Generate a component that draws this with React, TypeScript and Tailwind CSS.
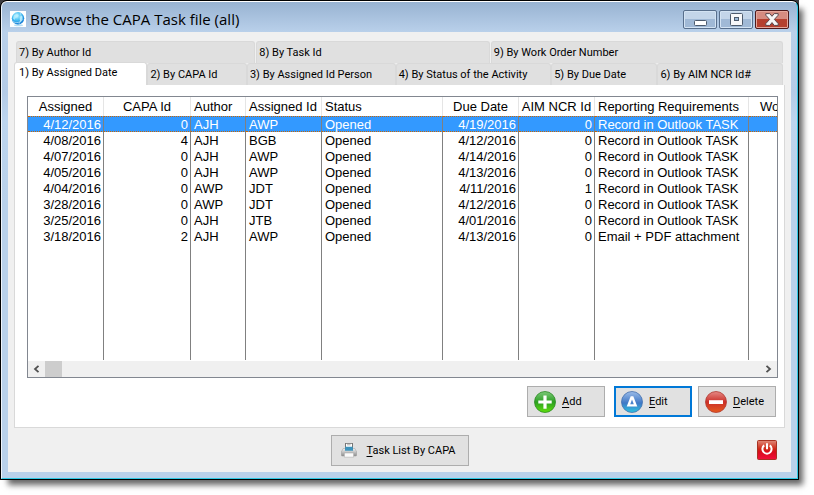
import { useState } from 'react';

const TABS_BACK = [
  { label: '7) By Author Id', width: 'flex-[240]' },
  { label: '8) By Task Id', width: 'flex-[234]' },
  { label: '9) By Work Order Number', width: 'flex-[294]' },
];

const TABS_FRONT = [
  { label: '1) By Assigned Date', width: 'flex-[132]' },
  { label: '2) By CAPA Id', width: 'flex-[99]' },
  { label: '3) By Assigned Id Person', width: 'flex-[150]' },
  { label: '4) By Status of the Activity', width: 'flex-[157]' },
  { label: '5) By Due Date', width: 'flex-[106]' },
  { label: '6) By AIM NCR Id#', width: 'flex-[126]' },
];

const COLUMNS = [
  { title: 'Assigned', col: 'w-[76px]', head: 'text-center', cell: 'text-right' },
  { title: 'CAPA Id', col: 'w-[87px]', head: 'text-center', cell: 'text-right' },
  { title: 'Author', col: 'w-[55px]', head: 'text-left pl-[3px]', cell: 'text-left' },
  { title: 'Assigned Id', col: 'w-[76px]', head: 'text-left pl-[3px]', cell: 'text-left' },
  { title: 'Status', col: 'w-[121px]', head: 'text-left pl-[3px]', cell: 'text-left' },
  { title: 'Due Date', col: 'w-[76px]', head: 'text-center', cell: 'text-right' },
  { title: 'AIM NCR Id', col: 'w-[76px]', head: 'text-center', cell: 'text-right' },
  { title: 'Reporting Requirements', col: 'w-[154px]', head: 'text-left pl-[3px]', cell: 'text-left' },
];

const ROWS = [
  ['4/12/2016', '0', 'AJH', 'AWP', 'Opened', '4/19/2016', '0', 'Record in Outlook TASK'],
  ['4/08/2016', '4', 'AJH', 'BGB', 'Opened', '4/12/2016', '0', 'Record in Outlook TASK'],
  ['4/07/2016', '0', 'AJH', 'AWP', 'Opened', '4/14/2016', '0', 'Record in Outlook TASK'],
  ['4/05/2016', '0', 'AJH', 'AWP', 'Opened', '4/13/2016', '0', 'Record in Outlook TASK'],
  ['4/04/2016', '0', 'AWP', 'JDT', 'Opened', '4/11/2016', '1', 'Record in Outlook TASK'],
  ['3/28/2016', '0', 'AWP', 'JDT', 'Opened', '4/12/2016', '0', 'Record in Outlook TASK'],
  ['3/25/2016', '0', 'AJH', 'JTB', 'Opened', '4/01/2016', '0', 'Record in Outlook TASK'],
  ['3/18/2016', '2', 'AJH', 'AWP', 'Opened', '4/13/2016', '0', 'Email + PDF attachment'],
];

function GlobeIcon() {
  return (
    <svg width="16" height="16" viewBox="0 0 16 16" aria-hidden="true">
      <defs>
        <radialGradient id="globe" cx="0.4" cy="0.3" r="0.75">
          <stop offset="0" stopColor="#c8f4ff" />
          <stop offset="0.45" stopColor="#49c3f5" />
          <stop offset="1" stopColor="#0a6fd0" />
        </radialGradient>
      </defs>
      <rect width="16" height="16" fill="#fff" />
      <ellipse cx="8.5" cy="14.3" rx="4.5" ry="1" fill="#b5ddf3" />
      <circle cx="8" cy="7.3" r="6.2" fill="url(#globe)" />
      <path d="M4 4.2 7 3l1.6 1.3-1 2-2.1.8L4.6 9 3 7.4zM9.6 5.6l2.6-.9.6 2.6-1.7 2.9-1.4-1z" fill="#b9f0ff" opacity=".75" />
      <path d="M3 10.6c3 1.8 7.4 1.2 10-2.4M10 1.8c1.8 2.8 1.6 7-1 11" stroke="#dff8ff" strokeWidth=".6" fill="none" />
    </svg>
  );
}

function MinimizeIcon() {
  return (
    <svg width="14" height="13" viewBox="0 0 14 13" aria-hidden="true">
      <rect x="1.5" y="7.5" width="12" height="5" rx="1" fill="#fff" stroke="#4d5b6d" />
    </svg>
  );
}

function MaximizeIcon() {
  return (
    <svg width="13" height="13" viewBox="0 0 13 13" aria-hidden="true">
      <rect x=".5" y=".5" width="12" height="12" rx="1" fill="#f7f8fa" stroke="#4d5b6d" />
      <rect x="4.5" y="4.5" width="4" height="3" fill="#9dbbd9" stroke="#4d5b6d" />
    </svg>
  );
}

function CloseIcon() {
  return (
    <svg width="14" height="13" viewBox="0 0 14 13" aria-hidden="true">
      <path
        d="M.8.6h4L7 3.3 9.2.6h4v1.6L9.4 6.4l3.8 4.2v1.8h-4L7 9.6l-2.2 2.8h-4v-1.8l3.8-4.2L.8 2.2z"
        fill="#f6f6f6"
        stroke="#5c474c"
        strokeLinejoin="round"
      />
    </svg>
  );
}

function AddIcon() {
  return (
    <svg width="22" height="22" viewBox="0 0 22 22" aria-hidden="true">
      <defs>
        <linearGradient id="add" x1="0" y1="0" x2="0" y2="1">
          <stop offset="0" stopColor="#7cc97a" />
          <stop offset="0.5" stopColor="#2c9f22" />
          <stop offset="1" stopColor="#5fe00c" />
        </linearGradient>
      </defs>
      <circle cx="11" cy="11" r="10.5" fill="url(#add)" stroke="#2a8a22" strokeWidth=".8" />
      <path d="M9.4 4.5h3.2v4.9h5.1v3.2h-5.1v5.1H9.4v-5.1H4.3V9.4h5.1z" fill="#fff" />
    </svg>
  );
}

function EditIcon() {
  return (
    <svg width="22" height="22" viewBox="0 0 22 22" aria-hidden="true">
      <defs>
        <linearGradient id="edit" x1="0" y1="0" x2="0" y2="1">
          <stop offset="0" stopColor="#9cbce8" />
          <stop offset="0.55" stopColor="#3f78c6" />
          <stop offset="1" stopColor="#2cc4e0" />
        </linearGradient>
      </defs>
      <circle cx="11" cy="11" r="10.5" fill="url(#edit)" stroke="#4370ae" strokeWidth=".8" />
      <path d="M9.7 5.2h2.6l4 10.2H5.7z" fill="#fff" />
      <path d="M11 8.6l1.8 4.6H9.2z" fill="#4a83cc" />
    </svg>
  );
}

function DeleteIcon() {
  return (
    <svg width="22" height="22" viewBox="0 0 22 22" aria-hidden="true">
      <defs>
        <linearGradient id="del" x1="0" y1="0" x2="0" y2="1">
          <stop offset="0" stopColor="#e58a86" />
          <stop offset="0.5" stopColor="#cb2f28" />
          <stop offset="1" stopColor="#e65a1e" />
        </linearGradient>
      </defs>
      <circle cx="11" cy="11" r="10.5" fill="url(#del)" stroke="#b03a30" strokeWidth=".8" />
      <rect x="4" y="9.2" width="14" height="3.8" fill="#fff" />
    </svg>
  );
}

function PrinterIcon() {
  return (
    <svg width="16" height="16" viewBox="0 0 16 16" aria-hidden="true">
      <defs>
        <linearGradient id="tray" x1="0" y1="0" x2="0" y2="1">
          <stop offset="0" stopColor="#f4f4f4" />
          <stop offset="1" stopColor="#8d8d8d" />
        </linearGradient>
      </defs>
      <path d="M2.2 6.5h11.6l1.9 3.4v3.2q0 .9-1 .9H1.3q-1 0-1-.9V9.9z" fill="url(#tray)" stroke="#999" strokeWidth=".5" />
      <path d="M4.2 1h7.6v7H4.2z" fill="#5b5b5b" />
      <path d="M5 1.7h6V5H5z" fill="#fff" />
      <path d="M6 2.8h3.6" stroke="#888" strokeWidth=".7" />
      <path d="M4.4 4.8h7.2l.5 4H3.9z" fill="#3d94bd" />
      <path d="M3.4 11h9.2v4.2H3.4z" fill="#fafafa" stroke="#a5a5a5" strokeWidth=".5" />
    </svg>
  );
}

function PowerIcon() {
  return (
    <svg width="20" height="20" viewBox="0 0 20 20" aria-hidden="true">
      <defs>
        <linearGradient id="power" x1="0" y1="0" x2="0" y2="1">
          <stop offset="0" stopColor="#e08a78" />
          <stop offset="0.45" stopColor="#cf2614" />
          <stop offset="0.6" stopColor="#d80c1c" />
          <stop offset="1" stopColor="#f2103c" />
        </linearGradient>
      </defs>
      <rect x=".5" y=".5" width="19" height="19" rx="1" fill="url(#power)" stroke="#a83222" />
      <path d="M7.2 5.4a4.6 4.6 0 1 0 5.6 0" fill="none" stroke="#fff" strokeWidth="2" />
      <path d="M10 3.2v6" stroke="#fff" strokeWidth="2" />
    </svg>
  );
}

interface TabProps {
  label: string;
  width: string;
  active: boolean;
  onSelect: () => void;
}

function Tab({ label, width, active, onSelect }: TabProps) {
  return (
    <button
      role="tab"
      aria-selected={active}
      onClick={onSelect}
      className={`${width} min-w-0 text-left whitespace-nowrap rounded-t-[3px] border-x border-t border-[#d9d9d9] ${
        active ? 'bg-white pl-1 pb-0.5 -mt-px -mb-px h-6' : 'bg-[#e0e0e0] pl-0.5 pt-0.5 h-[22px]'
      }`}
    >
      {label}
    </button>
  );
}

interface ActionProps {
  icon: React.ReactNode;
  label: string;
  focused?: boolean;
}

function ActionButton({ icon, label, focused }: ActionProps) {
  return (
    <button
      className={`flex items-center gap-1.5 h-[31px] w-[78px] bg-[#e1e1e1] ${
        focused ? 'border-2 border-[#0078d7] pl-[5px]' : 'border border-[#adadad] pl-1.5'
      }`}
    >
      {icon}
      <span className="pt-0.5">
        <span className="underline underline-offset-2">{label[0]}</span>
        {label.slice(1)}
      </span>
    </button>
  );
}

export default function App() {
  const [tab, setTab] = useState(TABS_FRONT[0].label);
  const [selected, setSelected] = useState(0);

  return (
    <div className="h-screen min-h-[400px] bg-white pr-[15px] pb-[15px] flex font-['Roboto','Liberation_Sans',sans-serif] text-[11px] text-black">
      <div className="flex-1 min-w-0 flex bg-[#3b3b3f] shadow-[6px_7px_6px_-2px_rgba(0,0,0,0.6)]">
        <main className="flex-1 min-w-0 flex border border-black rounded-t-[7px] bg-black">
          <div className="flex-1 min-w-0 flex flex-col rounded-t-md border border-t-white border-l-[#eef4fb] border-r-[#2fc8e4] border-b-[#2fc8e4] bg-[linear-gradient(180deg,#98b3d2_0px,#b9d0ea_30px,#b4cbe6_90px,#bdd5ee_120px,#b9d1ea_200px)] px-1.5 pb-1.5">
            {/* Title bar */}
            <header className="h-[30px] shrink-0 flex items-center">
              <div className="flex items-center gap-1 flex-1 min-w-0 pl-0.5 pt-1">
                <GlobeIcon />
                <h1 className="font-['Open_Sans','Noto_Sans',sans-serif] text-[15px] leading-5 whitespace-nowrap">
                  Browse the CAPA Task file (all)
                </h1>
              </div>
              <div className="flex gap-0.5 pr-0.5 pt-1">
                <button
                  aria-label="Minimize"
                  className="w-[34px] h-[19px] flex items-center justify-center rounded-[2px] border border-[#586f8c] shadow-[inset_0_0_0_1px_#d3e3f3] bg-linear-to-b from-[#c3d5e9] from-45% to-[#a0b9d6] to-50%"
                >
                  <MinimizeIcon />
                </button>
                <button
                  aria-label="Maximize"
                  className="w-[34px] h-[19px] flex items-center justify-center rounded-[2px] border border-[#586f8c] shadow-[inset_0_0_0_1px_#d3e3f3] bg-linear-to-b from-[#c3d5e9] from-45% to-[#a0b9d6] to-50%"
                >
                  <MaximizeIcon />
                </button>
                <button
                  aria-label="Close"
                  className="w-[34px] h-[19px] flex items-center justify-center rounded-[2px] border border-[#4e1a1c] shadow-[inset_0_0_0_1px_#e5a79c] bg-linear-to-b from-[#d58b80] from-45% to-[#b5402f] to-50%"
                >
                  <CloseIcon />
                </button>
              </div>
            </header>

            <div className="flex-1 min-h-0 flex flex-col bg-[#f0f0f0] pt-[9px] px-1.5">
              {/* Tabs */}
              <div role="tablist" className="pr-px">
                <div className="flex gap-px pl-0.5 pr-px">
                  {TABS_BACK.map((t) => (
                    <Tab key={t.label} {...t} active={tab === t.label} onSelect={() => setTab(t.label)} />
                  ))}
                </div>
                <div className="flex pr-px">
                  {TABS_FRONT.map((t) => (
                    <Tab key={t.label} {...t} active={tab === t.label} onSelect={() => setTab(t.label)} />
                  ))}
                </div>
              </div>

              {/* Panel */}
              <section className="flex-1 min-h-0 flex flex-col bg-white border border-t-0 border-[#d9d9d9] pt-[11px] pl-3 pr-1.5 pb-2.5">
                <div className="flex-1 min-h-0 flex flex-col border border-[#828790]">
                  <div className="flex-1 min-h-0 overflow-hidden grid">
                    <table className="w-full h-full table-fixed border-separate border-spacing-0 font-['Liberation_Sans',Arial,sans-serif] text-[13px] leading-[13px] whitespace-nowrap">
                      <colgroup>
                        {COLUMNS.map((c) => (
                          <col key={c.title} className={c.col} />
                        ))}
                        <col />
                      </colgroup>
                      <thead>
                        <tr className="h-[19px]">
                          {COLUMNS.map((c) => (
                            <th key={c.title} className={`font-normal py-0 pr-0 border-r border-[#e5e5e5] ${c.head}`}>
                              {c.title}
                            </th>
                          ))}
                          <th className="font-normal p-0 pl-[11px] text-left overflow-hidden">Work Order</th>
                        </tr>
                      </thead>
                      <tbody>
                        {ROWS.map((row, i) => {
                          const edge =
                            i === selected
                              ? 'border-y border-y-[#cc6600] [border-top-style:dotted] [border-bottom-style:dotted]'
                              : '';
                          return (
                            <tr
                              key={row[0]}
                              onClick={() => setSelected(i)}
                              className={i === selected ? 'h-4 bg-[#3399ff] text-white' : 'h-4'}
                            >
                              {row.map((value, j) => (
                                <td
                                  key={COLUMNS[j].title}
                                  className={`pt-px pb-0 pl-[3px] pr-0.5 border-r border-r-[#808080] ${COLUMNS[j].cell} ${edge}`}
                                >
                                  {value}
                                </td>
                              ))}
                              <td className={`p-0 ${edge}`} />
                            </tr>
                          );
                        })}
                        {/* Empty space under the rows keeps the column lines */}
                        <tr>
                          {COLUMNS.map((c) => (
                            <td key={c.title} className="p-0 border-r border-[#808080]" />
                          ))}
                          <td className="p-0" />
                        </tr>
                      </tbody>
                    </table>
                  </div>
                  {/* Horizontal scroll bar */}
                  <div className="h-4 mt-px shrink-0 flex items-center bg-[#f0f0f0]">
                    <button aria-label="Scroll left" className="w-[17px] h-full flex items-center justify-center">
                      <svg width="7" height="8" viewBox="0 0 7 8" aria-hidden="true">
                        <path d="M5.5.8 2 4l3.5 3.2" fill="none" stroke="#505050" strokeWidth="1.8" />
                      </svg>
                    </button>
                    <div className="w-[17px] h-full bg-[#cdcdcd]" />
                    <div className="flex-1" />
                    <button aria-label="Scroll right" className="w-[17px] h-full flex items-center justify-center">
                      <svg width="7" height="8" viewBox="0 0 7 8" aria-hidden="true">
                        <path d="M1.5.8 5 4 1.5 7.2" fill="none" stroke="#505050" strokeWidth="1.8" />
                      </svg>
                    </button>
                  </div>
                </div>

                <div className="flex justify-end gap-1.5 pt-2 pr-0.5">
                  <div className="pr-[3px]">
                    <ActionButton icon={<AddIcon />} label="Add" />
                  </div>
                  <ActionButton icon={<EditIcon />} label="Edit" focused />
                  <ActionButton icon={<DeleteIcon />} label="Delete" />
                </div>
              </section>

              {/* Footer */}
              <footer className="h-11 shrink-0 grid grid-cols-3 items-center">
                <button className="col-start-2 justify-self-center flex items-center gap-2.5 h-[31px] w-[138px] pl-[9px] bg-[#e1e1e1] border border-[#adadad] whitespace-nowrap">
                  <PrinterIcon />
                  <span className="pt-0.5">
                    <span className="underline underline-offset-2">T</span>ask List By CAPA
                  </span>
                </button>
                <button aria-label="Exit" className="justify-self-end mr-2">
                  <PowerIcon />
                </button>
              </footer>
            </div>
          </div>
        </main>
      </div>
    </div>
  );
}
